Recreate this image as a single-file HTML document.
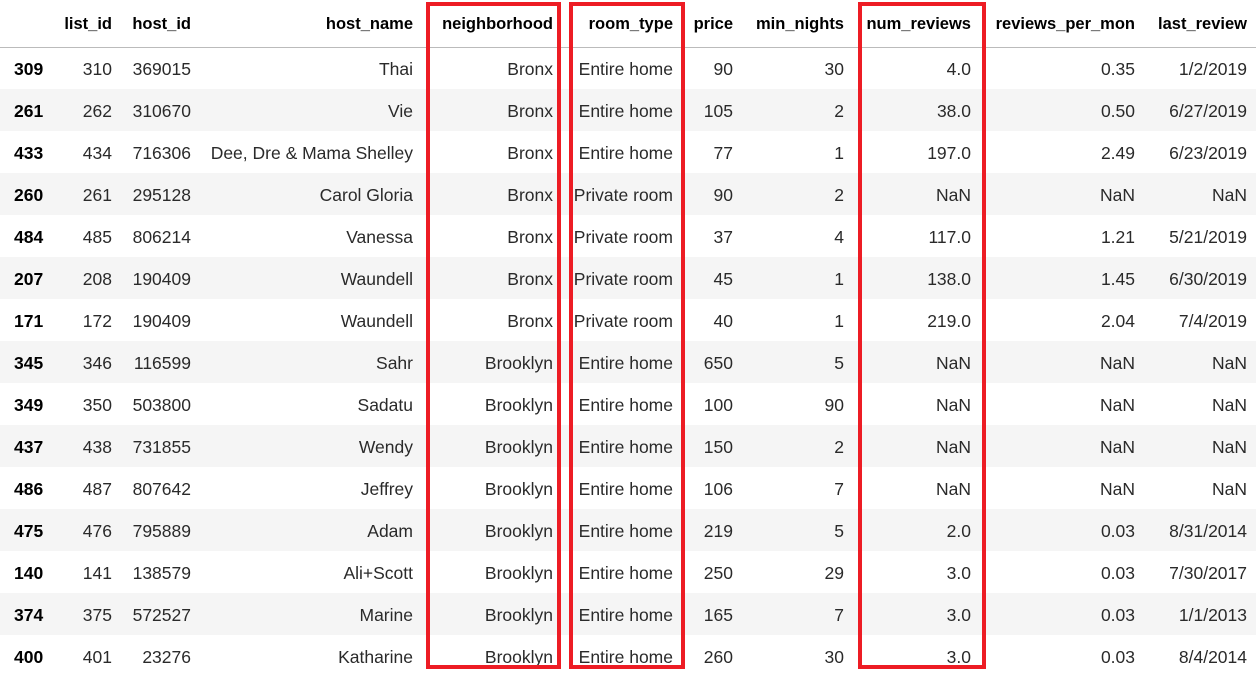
<!DOCTYPE html>
<html><head><meta charset="utf-8"><style>
body{margin:0;background:#fff;width:1260px;height:670px;overflow:hidden;position:relative;font-family:"Liberation Sans",sans-serif;font-size:17.5px;color:#2a2a2a}
table{border-collapse:collapse;table-layout:fixed;position:absolute;left:0;top:0;width:1256px}
td,th{padding:0;text-align:right;white-space:nowrap;overflow:visible;line-height:20px}
thead tr{height:47px}
th{font-size:16.5px;font-weight:bold;color:#000;border-bottom:1px solid #bbb;vertical-align:middle;padding-top:1px}
tbody tr{height:42px}
td{padding-top:2px;vertical-align:middle}
tbody tr:nth-child(even){background:#f5f5f5}
td:first-child,th:first-child{text-align:left;padding-left:14px;font-weight:bold;color:#000}
.box{position:absolute;border:4px solid #ed1c24;box-sizing:border-box;top:2px;height:667px}
</style></head><body>
<table>
<colgroup><col style="width:60px"><col style="width:52px"><col style="width:79px"><col style="width:222px"><col style="width:140px"><col style="width:120px"><col style="width:60px"><col style="width:111px"><col style="width:127px"><col style="width:164px"><col style="width:112px"><col style="width:9px"></colgroup>
<thead><tr><th></th><th>list_id</th><th>host_id</th><th>host_name</th><th>neighborhood</th><th>room_type</th><th>price</th><th>min_nights</th><th>num_reviews</th><th>reviews_per_mon</th><th>last_review</th><th></th></tr></thead>
<tbody>
<tr><td>309</td><td>310</td><td>369015</td><td>Thai</td><td>Bronx</td><td>Entire home</td><td>90</td><td>30</td><td>4.0</td><td>0.35</td><td>1/2/2019</td><td></td></tr>
<tr><td>261</td><td>262</td><td>310670</td><td>Vie</td><td>Bronx</td><td>Entire home</td><td>105</td><td>2</td><td>38.0</td><td>0.50</td><td>6/27/2019</td><td></td></tr>
<tr><td>433</td><td>434</td><td>716306</td><td>Dee, Dre &amp; Mama Shelley</td><td>Bronx</td><td>Entire home</td><td>77</td><td>1</td><td>197.0</td><td>2.49</td><td>6/23/2019</td><td></td></tr>
<tr><td>260</td><td>261</td><td>295128</td><td>Carol Gloria</td><td>Bronx</td><td>Private room</td><td>90</td><td>2</td><td>NaN</td><td>NaN</td><td>NaN</td><td></td></tr>
<tr><td>484</td><td>485</td><td>806214</td><td>Vanessa</td><td>Bronx</td><td>Private room</td><td>37</td><td>4</td><td>117.0</td><td>1.21</td><td>5/21/2019</td><td></td></tr>
<tr><td>207</td><td>208</td><td>190409</td><td>Waundell</td><td>Bronx</td><td>Private room</td><td>45</td><td>1</td><td>138.0</td><td>1.45</td><td>6/30/2019</td><td></td></tr>
<tr><td>171</td><td>172</td><td>190409</td><td>Waundell</td><td>Bronx</td><td>Private room</td><td>40</td><td>1</td><td>219.0</td><td>2.04</td><td>7/4/2019</td><td></td></tr>
<tr><td>345</td><td>346</td><td>116599</td><td>Sahr</td><td>Brooklyn</td><td>Entire home</td><td>650</td><td>5</td><td>NaN</td><td>NaN</td><td>NaN</td><td></td></tr>
<tr><td>349</td><td>350</td><td>503800</td><td>Sadatu</td><td>Brooklyn</td><td>Entire home</td><td>100</td><td>90</td><td>NaN</td><td>NaN</td><td>NaN</td><td></td></tr>
<tr><td>437</td><td>438</td><td>731855</td><td>Wendy</td><td>Brooklyn</td><td>Entire home</td><td>150</td><td>2</td><td>NaN</td><td>NaN</td><td>NaN</td><td></td></tr>
<tr><td>486</td><td>487</td><td>807642</td><td>Jeffrey</td><td>Brooklyn</td><td>Entire home</td><td>106</td><td>7</td><td>NaN</td><td>NaN</td><td>NaN</td><td></td></tr>
<tr><td>475</td><td>476</td><td>795889</td><td>Adam</td><td>Brooklyn</td><td>Entire home</td><td>219</td><td>5</td><td>2.0</td><td>0.03</td><td>8/31/2014</td><td></td></tr>
<tr><td>140</td><td>141</td><td>138579</td><td>Ali+Scott</td><td>Brooklyn</td><td>Entire home</td><td>250</td><td>29</td><td>3.0</td><td>0.03</td><td>7/30/2017</td><td></td></tr>
<tr><td>374</td><td>375</td><td>572527</td><td>Marine</td><td>Brooklyn</td><td>Entire home</td><td>165</td><td>7</td><td>3.0</td><td>0.03</td><td>1/1/2013</td><td></td></tr>
<tr><td>400</td><td>401</td><td>23276</td><td>Katharine</td><td>Brooklyn</td><td>Entire home</td><td>260</td><td>30</td><td>3.0</td><td>0.03</td><td>8/4/2014</td><td></td></tr>
</tbody></table>
<div class="box" style="left:426px;width:135px"></div>
<div class="box" style="left:569px;width:116px"></div>
<div class="box" style="left:858px;width:128px"></div>
</body></html>
